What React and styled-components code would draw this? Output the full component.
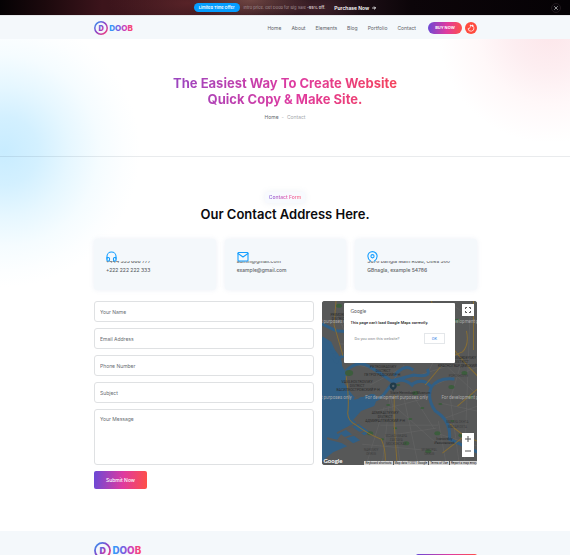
import React from "react";
import styled, { createGlobalStyle } from "styled-components";

const brand = "linear-gradient(95deg, #6a49d6 0%, #df3a9f 55%, #ff5046 100%)";
const panel = "#f4f8fb";

const GlobalStyle = createGlobalStyle`
  * { box-sizing: border-box; }
  body { margin: 0; background: #fff; color: #5f6468; font-family: Inter, "Liberation Sans", sans-serif; font-size: 5px; }
  a { color: inherit; text-decoration: none; }
  h1, h2, p { margin: 0; }
  button { border: 0; padding: 0; font-family: inherit; cursor: pointer; }
`;

const Banner = styled.aside`
  display: grid;
  grid-template-columns: 1fr auto 1fr;
  align-items: center;
  height: 15px;
  color: #fff;
  background:
    radial-gradient(ellipse 60px 22px at 44% 0, rgba(128, 84, 78, 0.75), transparent),
    radial-gradient(ellipse 50px 16px at 55% 50%, rgba(70, 36, 46, 0.7), transparent),
    radial-gradient(ellipse 80px 26px at 33% 20%, rgba(96, 38, 42, 0.8), transparent),
    linear-gradient(90deg, #050204 0, #1c090d 8%, #3c141b 18%, #32151c 40%, #26141c 58%, #0c0509 72%, #050205 100%);
`;

const Offer = styled.div`
  grid-column: 2;
  display: flex;
  align-items: center;
`;

const OfferBadge = styled.span`
  padding: 0 5px;
  border-radius: 5px;
  background: #059dff;
  font-size: 4px;
  font-weight: 600;
  line-height: 9px;
`;

const OfferText = styled.span`
  margin-left: 4px;
  color: #a59498;
  font-size: 4px;
  b { color: #ddd0d2; font-weight: 600; }
`;

const OfferLink = styled.a`
  display: flex;
  align-items: center;
  gap: 3px;
  margin-left: 9px;
  font-weight: 600;
`;

const CloseButton = styled.button`
  display: grid;
  place-items: center;
  justify-self: end;
  width: 10px;
  height: 10px;
  margin-right: 9px;
  border: 1px solid #20181d;
  border-radius: 50%;
  background: #08050a;
  color: #ccc;
`;

const Container = styled.div`
  margin: 0 93px 0 94px;
`;

const Header = styled.header`
  border-top: 1px solid #e6e8eb;
  background: ${panel};
`;

const HeaderRow = styled(Container)`
  display: flex;
  align-items: center;
  height: 23px;
`;

const LogoLink = styled.a`
  display: flex;
  margin-right: auto;
`;

const Nav = styled.nav`
  display: flex;
  gap: 10px;
  margin-right: 12px;
`;

const BuyButton = styled.button`
  width: 34px;
  height: 12px;
  border-radius: 6px;
  background: ${brand};
  color: #fff;
  font-size: 4px;
  font-weight: 700;
`;

const ThemeButton = styled.button`
  display: grid;
  place-items: center;
  width: 12px;
  height: 12px;
  margin-left: 3px;
  border-radius: 50%;
  background: #ff4b3e;
  color: #fff;
`;

const Page = styled.main`
  background:
    radial-gradient(circle 136px at 4px 112px, #c8ecff 0, #d3f0ff 25%, #e6f7ff 48%, #f5fcff 70%, #fcfeff 88%, rgba(255, 255, 255, 0) 100%),
    radial-gradient(circle 112px at calc(100% - 20px) -8px, #fce6ea 0, #fdeef1 35%, #fff8f9 65%, rgba(255, 255, 255, 0) 100%);
`;

const Hero = styled.section`
  padding: 36px 0;
  height: 118px;
  border-bottom: 1px solid rgba(40, 60, 80, 0.1);
  text-align: center;
`;

const HeroTitle = styled.h1`
  width: fit-content;
  margin: 0 auto;
  background: linear-gradient(95deg, #9a46c0 0, #df3a9f 55%, #f5435a 100%);
  background-clip: text;
  color: transparent;
  font-size: 13px;
  font-weight: 700;
  line-height: 16px;
`;

const Crumbs = styled.nav`
  display: flex;
  justify-content: center;
  gap: 3px;
  margin-top: 7px;
  line-height: 6px;
  color: #a5a9ad;
  a { color: #62676b; }
`;

const Contact = styled.section`
  padding: 35px 0 42px;
`;

const Eyebrow = styled.p`
  width: fit-content;
  margin: 0 auto;
  padding: 0 4px;
  border-radius: 2px;
  background: #f8fafe;
  box-shadow: 0 0 6px rgba(110, 130, 170, 0.12);
  line-height: 11px;
  font-weight: 500;
  span {
    background: linear-gradient(90deg, #805bd8, #e84fa5 60%, #fb6a80);
    background-clip: text;
    color: transparent;
  }
`;

const SectionTitle = styled.h2`
  margin-top: 3px;
  color: #0b0b0e;
  text-align: center;
  font-size: 13px;
  font-weight: 600;
  line-height: 16px;
`;

const Cards = styled.div`
  display: grid;
  grid-template-columns: repeat(3, 1fr);
  gap: 9px;
  margin-top: 17px;
`;

const Card = styled.article`
  min-height: 51px;
  padding: 12px;
  border-radius: 3px;
  background: ${panel};
  box-shadow: 0 0 5px rgba(120, 150, 190, 0.14);
`;

const CardIcon = styled.div`
  position: relative;
  z-index: 1;
  height: 10px;
  background: ${panel};
  color: #159eff;
  svg { display: block; }
`;

const CardLines = styled.p`
  margin-top: -4px;
  font-weight: 500;
  line-height: 9px;
  white-space: nowrap;
`;

const Columns = styled.div`
  display: grid;
  grid-template-columns: 24fr 17fr;
  align-items: start;
  gap: 8px;
  margin-top: 11px;
`;

const Form = styled.form`
  display: grid;
  gap: 6px;
`;

const fieldStyle = `
  display: block;
  width: 100%;
  border: 1px solid #dfe1e3;
  border-radius: 3px;
  background: #fff;
  color: #3c4044;
  font-family: inherit;
  font-size: 5px;
  outline: 0;
  &::placeholder { color: #686d72; opacity: 1; }
`;

const Field = styled.input`
  ${fieldStyle}
  height: 21px;
  padding: 0 5px;
`;

const Message = styled.textarea`
  ${fieldStyle}
  height: 56px;
  padding: 6px 5px;
  resize: none;
`;

const Submit = styled.button`
  justify-self: start;
  width: 53px;
  height: 18px;
  border-radius: 2px;
  background: ${brand};
  color: #fff;
  font-size: 5px;
  font-weight: 500;
`;

const MapBox = styled.div`
  position: relative;
  height: 164px;
  overflow: hidden;
  border-radius: 3px;
  background: #535353;
  font-family: Roboto, sans-serif;
`;

const MapDrawing = styled.svg`
  display: block;
  width: 100%;
  height: 100%;
`;

const MapDialog = styled.div`
  position: absolute;
  top: 2px;
  left: 22px;
  right: 22px;
  height: 60px;
  padding: 5px 10px 0 7px;
  border-radius: 1px;
  background: #fff;
  color: #202124;
`;

const DialogBrand = styled.div`
  color: #5b5e62;
  font-family: Lato, sans-serif;
  font-size: 5px;
  line-height: 7px;
`;

const DialogText = styled.p`
  margin-top: 5px;
  font-size: 4px;
  font-weight: 500;
  line-height: 6px;
  white-space: nowrap;
`;

const DialogFoot = styled.div`
  display: flex;
  align-items: center;
  justify-content: space-between;
  margin-top: 7px;
  padding-left: 4px;
  color: #85898d;
  font-size: 4px;
  white-space: nowrap;
`;

const OkButton = styled.button`
  width: 21px;
  height: 11px;
  border: 1px solid #e4e7ea;
  background: #fff;
  color: #3c83e6;
  font-size: 4px;
`;

const MapControl = styled.button`
  display: grid;
  place-items: center;
  width: 12px;
  height: 12px;
  background: #fff;
  color: #555;
`;

const FullScreen = styled(MapControl)`
  position: absolute;
  top: 3px;
  right: 3px;
`;

const ZoomControls = styled.div`
  position: absolute;
  right: 3px;
  bottom: 8px;
  display: grid;
  border-radius: 1px;
  background: #fff;
`;

const MapLegal = styled.div`
  position: absolute;
  right: 0;
  bottom: 0;
  display: flex;
  gap: 1px;
  color: #111;
  font-size: 3px;
  line-height: 4px;
  a { padding: 0 1px; background: #d3d3d3; white-space: nowrap; }
`;

const MapBrand = styled.div`
  position: absolute;
  left: 2px;
  bottom: 0;
  color: #fff;
  font-family: Lato, sans-serif;
  font-size: 6px;
  font-weight: 700;
  line-height: 8px;
`;

const Footer = styled.footer`
  background: ${panel};
`;

const FooterRow = styled(Container)`
  display: flex;
  align-items: flex-start;
  justify-content: space-between;
  padding: 11px 0;
`;

const FooterButton = styled.button`
  width: 61px;
  height: 16px;
  margin-top: 12px;
  border-radius: 2px;
  background: ${brand};
  color: #fff;
  font-size: 5px;
`;

function Logo({ id, height }) {
  return (
    <svg height={height} viewBox="0 0 46 16" role="img" aria-label="Doob">
      <defs>
        <linearGradient id={`${id}-ring`} x1="0" y1="0" x2="1" y2="1">
          <stop offset="0" stopColor="#2d9cf4" />
          <stop offset="0.45" stopColor="#8a43c9" />
          <stop offset="1" stopColor="#ff3d78" />
        </linearGradient>
        <linearGradient id={`${id}-word`} x1="0" x2="1">
          <stop offset="0" stopColor="#25a7ff" />
          <stop offset="0.4" stopColor="#7a5ade" />
          <stop offset="0.7" stopColor="#dd3bb0" />
          <stop offset="1" stopColor="#ff4c58" />
        </linearGradient>
      </defs>
      <circle cx="8" cy="8" r="7.1" fill="none" stroke={`url(#${id}-ring)`} strokeWidth="1.7" />
      <g fontFamily="Inter, sans-serif" fontWeight="800">
        <text x="8.2" y="11" fontSize="8.4" fontWeight="900" textAnchor="middle" fill={`url(#${id}-ring)`}>D</text>
        <text x="17.4" y="11.2" fontSize="9.2" fill={`url(#${id}-word)`}>DOOB</text>
      </g>
    </svg>
  );
}

const strokeProps = { fill: "none", stroke: "currentColor", strokeLinecap: "round", strokeLinejoin: "round" };

const Headphones = () => (
  <svg width="11" height="11" viewBox="0 0 22 22" {...strokeProps} strokeWidth="2.2">
    <path d="M2 16v-5a9 9 0 0 1 18 0v5" />
    <path d="M20 17a2 2 0 0 1-2 3h-1a2 2 0 0 1-2-2v-3a2 2 0 0 1 2-2h3zM2 17a2 2 0 0 0 2 3h1a2 2 0 0 0 2-2v-3a2 2 0 0 0-2-2H2z" />
  </svg>
);

const Mail = () => (
  <svg width="12" height="11" viewBox="0 0 24 22" {...strokeProps} strokeWidth="2.2">
    <rect x="2" y="3" width="20" height="17" rx="1.5" />
    <path d="M2 5l10 7 10-7" />
  </svg>
);

const Pin = () => (
  <svg width="11" height="11" viewBox="0 0 22 22" {...strokeProps} strokeWidth="2.2">
    <path d="M7 20C3.500 17.500 1.800 14.500 1.800 10.500a9.200 9.200 0 0 1 18.400 0c0 4-1.700 7-5.200 9.500" />
    <circle cx="11" cy="10.500" r="3.200" />
  </svg>
);

const cards = [
  { Icon: Headphones, lines: ["+444 555 666 777", "+222 222 222 333"] },
  { Icon: Mail, lines: ["admin@gmail.com", "example@gmail.com"] },
  { Icon: Pin, lines: ["5678 Bangla Main Road, cities 580", "GBnagla, example 54786"] },
];

const parks = [
  [17, 5, 3], [48, 132, 3], [60, 138, 2], [76, 84, 2], [84, 142, 3], [93, 92, 3], [100, 107, 2], [115, 132, 3],
  [129, 86, 3], [142, 72, 3], [130, 120, 2], [73, 127, 2], [106, 150, 3], [148, 96, 3], [27, 72, 4], [135, 20, 3],
  [118, 103, 2], [139, 134, 3], [88, 118, 2], [146, 12, 2], [66, 104, 2],
];

const places = [
  [18, 15, "PRIMORSKY"], [17, 19, "DISTRICT"],
  [61, 67, "PETROGRADSKY"], [61, 71, "DISTRICT"], [60, 75, "ПЕТРОГРАДСКИЙ Р-Н"],
  [35, 82, "VASILEOSTROVSKY"], [35, 86, "DISTRICT"], [36, 90, "ВАСИЛЕОСТРОВСКИЙ Р-Н"],
  [63, 113, "ADMIRALTEYSKY"], [63, 117, "DISTRICT"], [63, 121, "АДМИРАЛТЕЙСКИЙ Р-Н"],
  [136, 58, "KRASNOGVARDEYSKY"], [139, 62, "DISTRICT"], [135, 66, "КРАСНОГВАРДЕЙСКИЙ"],
  [88, 93, "State Hermitage Museum"], [122, 139, "Ivanovskiy"], [122, 143, "Ивановский"],
];

const faintPlaces = [
  [74, 136, "MOSKOVSKAYA"], [74, 140, "ZASTAVA"], [74, 144, "МОСКОВСКАЯ"], [49, 150, "NARVSKIY"], [49, 154, "OKRUG"],
  [107, 150, "MUNICIPAL"], [107, 154, "OKRUG"], [135, 122, "MALAYA OKHTA"], [135, 127, "МАЛАЯ ОХТА"], [136, 76, "POROKHOVYE"],
];

function CityMap() {
  return (
    <MapDrawing viewBox="0 0 155 164" preserveAspectRatio="xMidYMid slice" role="img" aria-label="City map">
      <rect width="155" height="164" fill="#575858" />
      <g fill="none" stroke="#656666" strokeWidth="0.6">
        <path d="M44 164l18-58M60 164l8-70M78 164l-9-68M96 164l-14-66M70 103l45 40M58 124h58M40 143l74 7M88 90l24 38M54 110l46-12M62 135l52-8M124 164l-8-44M137 164l-9-66 12-40M112 84l43-18M118 102l37 8M120 118l35-13M114 132l41 13M142 164l6-164M125 66l30 28M130 4l25 18M20 25l24-16M18 43l30 2M26 62l36 8M48 84l34-18M60 95l22-31M91 76l38-12M104 75l14-28M12 9l14 28" />
      </g>
      <path d="M0 37Q6 38 12 48Q21 58 20 65L25 73L22 82Q31 96 35 98L49 93Q58 92 52 105L39 110L31 119L48 131L42 134L28 124L23 128L38 139L31 142L19 133L15 139L25 145L11 151L0 160Z" fill="#315f85" />
      <path d="M0 37l8 5 4 9-7-1 11 12M37 96Q54 106 65 89T91 85M24 70Q35 59 46 65T69 80L91 74Q110 77 105 68M90 83Q101 76 109 86Q104 97 113 110Q129 120 127 138Q138 143 155 151M109 86Q116 76 132 78M72 75Q82 62 91 69M12 61Q25 50 35 55M0 23l14 7 12 1" fill="none" stroke="#315f85" strokeWidth="3" />
      <path d="M32 98l15-7M15 132l24-12M22 137l20-7M5 137l16 4" stroke="#575858" strokeWidth="2" />
      <g fill="#3c5d3d">
        {parks.map(([x, y, r]) => <ellipse key={`${x}-${y}`} cx={x} cy={y} rx={r} ry={r - 1} />)}
      </g>
      <g fill="none" stroke="#866d34" strokeWidth="1">
        <path d="M24 75Q27 91 26 109Q24 119 34 124Q46 133 59 138Q64 148 63 164M72 94v31l3 39M109 0Q117 29 128 44T155 75M144 30Q147 44 140 51L123 58M118 66L103 84M155 88L135 105M128 123Q136 133 155 140M120 152l22-17M14 0l-2 24 9 31M151 0v49" />
      </g>
      <g fill="#2b2b2b" fontSize="3.500" fontWeight="400" textAnchor="middle">
        {places.map(([x, y, t]) => <text key={t + y} x={x} y={y}>{t}</text>)}
      </g>
      <g fill="#3d3d3d" fontSize="3" textAnchor="middle">
        {faintPlaces.map(([x, y, t]) => <text key={t + y} x={x} y={y}>{t}</text>)}
      </g>
      <g fill="#aaa" fontSize="4.500">
        {[22, 98].map((y) => (
          <g key={y}>
            <text x="-33" y={y}>For development purposes only</text>
            <text x="43" y={y}>For development purposes only</text>
            <text x="119" y={y}>For development purposes only</text>
          </g>
        ))}
      </g>
      <path d="M71 91c0-3-3.500-3-3.500-6a3.500 3.500 0 0 1 7 0c0 3-3.500 3-3.500 6z" fill="#203a49" />
      <circle cx="71" cy="85" r="1.200" fill="#53636b" />
    </MapDrawing>
  );
}

export default function App() {
  return (
    <>
      <GlobalStyle />
      <Banner>
        <Offer>
          <OfferBadge>Limited Time Offer</OfferBadge>
          <OfferText>Intro price. Get Doob for Big Sale <b>-95% off.</b></OfferText>
          <OfferLink href="#buy">
            Purchase Now
            <svg width="4" height="4" viewBox="0 0 8 8" {...strokeProps} strokeWidth="1.6"><path d="M1 4h6M4.500 1.500L7 4 4.500 6.500" /></svg>
          </OfferLink>
        </Offer>
        <CloseButton aria-label="Close">
          <svg width="4" height="4" viewBox="0 0 8 8" {...strokeProps} strokeWidth="1.400"><path d="M1 1l6 6M7 1L1 7" /></svg>
        </CloseButton>
      </Banner>
      <Header>
        <HeaderRow>
          <LogoLink href="#home"><Logo id="top" height={14} /></LogoLink>
          <Nav>
            {["Home", "About", "Elements", "Blog", "Portfolio", "Contact"].map((item) => (
              <a key={item} href={`#${item.toLowerCase()}`}>{item}</a>
            ))}
          </Nav>
          <BuyButton>BUY NOW</BuyButton>
          <ThemeButton aria-label="Switch theme">
            <svg width="8" height="8" viewBox="0 0 16 16" {...strokeProps} strokeWidth="1.500">
              <path d="M7 2.500c.5 4-1 6.500-5 7a6 6 0 1 0 5-7z" />
              <path d="M11 2v3M9.500 3.500h3" />
            </svg>
          </ThemeButton>
        </HeaderRow>
      </Header>
      <Page>
        <Hero>
          <HeroTitle>The Easiest Way To Create Website<br />Quick Copy &amp; Make Site.</HeroTitle>
          <Crumbs aria-label="Breadcrumb"><a href="#home">Home</a><span>-</span><span>Contact</span></Crumbs>
        </Hero>
        <Contact>
          <Eyebrow><span>Contact Form</span></Eyebrow>
          <SectionTitle>Our Contact Address Here.</SectionTitle>
          <Container>
            <Cards>
              {cards.map(({ Icon, lines }) => (
                <Card key={lines[0]}>
                  <CardIcon><Icon /></CardIcon>
                  <CardLines>{lines[0]}<br />{lines[1]}</CardLines>
                </Card>
              ))}
            </Cards>
            <Columns>
              <Form onSubmit={(e) => e.preventDefault()}>
                <Field type="text" aria-label="Your Name" placeholder="Your Name" />
                <Field type="email" aria-label="Email Address" placeholder="Email Address" />
                <Field type="tel" aria-label="Phone Number" placeholder="Phone Number" />
                <Field type="text" aria-label="Subject" placeholder="Subject" />
                <Message aria-label="Your Message" placeholder="Your Message" />
                <Submit type="submit">Submit Now</Submit>
              </Form>
              <MapBox>
                <CityMap />
                <MapDialog role="dialog" aria-label="Google Maps">
                  <DialogBrand>Google</DialogBrand>
                  <DialogText>This page can't load Google Maps correctly.</DialogText>
                  <DialogFoot><a href="#owner">Do you own this website?</a><OkButton>OK</OkButton></DialogFoot>
                </MapDialog>
                <FullScreen aria-label="Full screen">
                  <svg width="6" height="6" viewBox="0 0 12 12" fill="none" stroke="currentColor" strokeWidth="2"><path d="M1 4V1h3M8 1h3v3M11 8v3H8M4 11H1V8" /></svg>
                </FullScreen>
                <ZoomControls>
                  <MapControl aria-label="Zoom in">
                    <svg width="6" height="6" viewBox="0 0 6 6" stroke="currentColor"><path d="M3 0v6M0 3h6" /></svg>
                  </MapControl>
                  <MapControl aria-label="Zoom out">
                    <svg width="6" height="6" viewBox="0 0 6 6" stroke="currentColor"><path d="M0 3h6" /></svg>
                  </MapControl>
                </ZoomControls>
                <MapBrand>Google</MapBrand>
                <MapLegal>
                  <a href="#keys">Keyboard shortcuts</a>
                  <a href="#data">Map data ©2021 Google</a>
                  <a href="#terms">Terms of Use</a>
                  <a href="#report">Report a map error</a>
                </MapLegal>
              </MapBox>
            </Columns>
          </Container>
        </Contact>
      </Page>
      <Footer>
        <FooterRow>
          <LogoLink href="#home"><Logo id="foot" height={17} /></LogoLink>
          <FooterButton>Purchase Now</FooterButton>
        </FooterRow>
      </Footer>
    </>
  );
}
